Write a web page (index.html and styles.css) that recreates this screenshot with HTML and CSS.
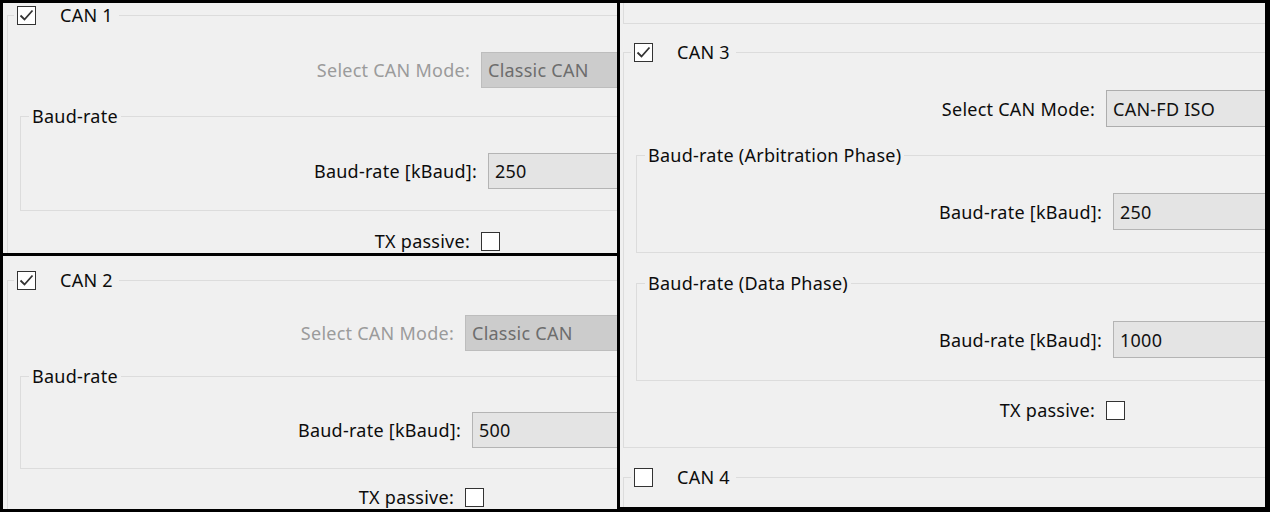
FILE: index.html
```html
<!DOCTYPE html>
<html>
<head>
<meta charset="utf-8">
<link rel="stylesheet" href="styles.css">
</head>
<body>
<div class="screen">
  <div class="col">
    <div class="panel p1">
      <fieldset class="grp outer open">
        <legend class="head"><span class="chk on"><svg viewBox="0 0 17 17"><polyline points="2.5,8.5 6.5,12.5 14.5,3.5"/></svg></span><span class="cap">CAN 1</span></legend>
        <div class="row mode"><span class="lbl dis">Select CAN Mode:</span><div class="combo dis">Classic CAN</div></div>
        <fieldset class="grp inner">
          <legend class="sub">Baud-rate</legend>
          <div class="row baud"><span class="lbl">Baud-rate [kBaud]:</span><div class="field">250</div></div>
        </fieldset>
        <div class="row tx"><span class="lbl">TX passive:</span><span class="chk"></span></div>
      </fieldset>
    </div>
    <div class="panel p2">
      <fieldset class="grp outer open">
        <legend class="head"><span class="chk on"><svg viewBox="0 0 17 17"><polyline points="2.5,8.5 6.5,12.5 14.5,3.5"/></svg></span><span class="cap">CAN 2</span></legend>
        <div class="row mode"><span class="lbl dis">Select CAN Mode:</span><div class="combo dis">Classic CAN</div></div>
        <fieldset class="grp inner">
          <legend class="sub">Baud-rate</legend>
          <div class="row baud"><span class="lbl">Baud-rate [kBaud]:</span><div class="field">500</div></div>
        </fieldset>
        <div class="row tx"><span class="lbl">TX passive:</span><span class="chk"></span></div>
      </fieldset>
    </div>
  </div>
  <div class="panel p3">
    <div class="prev"></div>
    <fieldset class="grp outer can3">
      <legend class="head"><span class="chk on"><svg viewBox="0 0 17 17"><polyline points="2.5,8.5 6.5,12.5 14.5,3.5"/></svg></span><span class="cap">CAN 3</span></legend>
      <div class="row mode"><span class="lbl">Select CAN Mode:</span><div class="combo">CAN-FD ISO</div></div>
      <fieldset class="grp inner arb">
        <legend class="sub">Baud-rate (Arbitration Phase)</legend>
        <div class="row baud"><span class="lbl">Baud-rate [kBaud]:</span><div class="field">250</div></div>
      </fieldset>
      <fieldset class="grp inner data">
        <legend class="sub">Baud-rate (Data Phase)</legend>
        <div class="row baud"><span class="lbl">Baud-rate [kBaud]:</span><div class="field">1000</div></div>
      </fieldset>
      <div class="row tx"><span class="lbl">TX passive:</span><span class="chk"></span></div>
    </fieldset>
    <fieldset class="grp outer open can4">
      <legend class="head"><span class="chk"></span><span class="cap">CAN 4</span></legend>
    </fieldset>
  </div>
</div>
</body>
</html>
```
FILE: styles.css
```css
* { box-sizing: border-box; }
html, body { margin: 0; padding: 0; }
body {
  width: 1270px;
  height: 512px;
  overflow: hidden;
  background: #000;
  font-family: "Noto Sans", "Open Sans", sans-serif;
  font-size: 18px;
  letter-spacing: 0.25px;
  color: #0c0c0c;
}
.screen {
  display: grid;
  grid-template-columns: 614px 645px;
  column-gap: 3px;
  padding: 3px 5px 0 3px;
  height: 512px;
  align-items: start;
}
.col { display: flex; flex-direction: column; gap: 3px; }
.panel { background: #f0f0f0; overflow: hidden; }
.p1 { height: 250px; }
.p2 { height: 253px; }
.p3 { height: 504px; }

.grp {
  margin: 0;
  padding: 0;
  border: 1px solid #dcdcdc;
  min-width: 0;
}
legend { padding: 0; }
.grp.outer { width: 1000px; margin-left: 4px; }
.grp.open { padding-bottom: 200px; }

.head {
  display: flex;
  align-items: center;
  margin-left: 6px;
  padding: 0 6px 0 3px;
  height: 19px;
}
.cap { margin-left: 24px; line-height: 19px; }

.sub {
  margin-left: 8px;
  padding: 0 3px;
  line-height: 22px;
}
.grp.inner { width: 900px; margin-left: 12px; }

.row { display: flex; align-items: center; }
.lbl { text-align: right; margin-right: 11px; white-space: nowrap; }
.lbl.dis { color: #9b9b9b; }
.tx { height: 19px; }
.tx .lbl { line-height: 19px; }

.combo, .field {
  width: 300px;
  padding-left: 6px;
  display: flex;
  align-items: center;
  white-space: nowrap;
}
.combo {
  height: 36px;
  background: #e5e5e5;
  border: 1px solid #adadad;
  color: #111;
}
.combo.dis {
  background: #cccccc;
  border-color: #bdbdbd;
  color: #6d6d6d;
}
.field {
  height: 36px;
  background: #e4e4e4;
  border: 1px solid #b4b4b4;
  color: #111;
}

.chk {
  width: 19px;
  height: 19px;
  flex: none;
  border: 1px solid #333;
  background: #fff;
  display: block;
}
.chk svg { display: block; width: 17px; height: 17px; }
.chk polyline { fill: none; stroke: #333; stroke-width: 1.8; }

/* panel 1 */
.p1 .grp.outer { margin-top: 3px; }
.p1 .mode { margin-top: 27px; }
.p1 .mode .lbl, .p1 .tx .lbl { width: 462px; }
.p1 .grp.inner { margin-top: 17px; padding-bottom: 21px; }
.p1 .baud { margin-top: 26px; }
.p1 .baud .lbl { width: 456px; }
.p1 .tx { margin-top: 21px; }

/* panel 2 */
.p2 .grp.outer { margin-top: 15px; }
.p2 .mode { margin-top: 25px; }
.p2 .mode .lbl, .p2 .tx .lbl { width: 446px; }
.p2 .grp.inner { margin-top: 14px; padding-bottom: 20px; }
.p2 .baud { margin-top: 25px; }
.p2 .baud .lbl { width: 440px; }
.p2 .tx { margin-top: 19px; }

/* panel 3 */
.prev {
  width: 1000px;
  height: 21px;
  margin-left: 3px;
  border-left: 1px solid #dcdcdc;
  border-bottom: 1px solid #dcdcdc;
}
.p3 .grp.outer { margin-left: 3px; }
.p3 .head { margin-left: 7px; }
.p3 .grp.can3 { margin-top: 19px; padding-bottom: 27px; }
.p3 .mode { margin-top: 28px; }
.p3 .combo, .p3 .field { height: 37px; }
.p3 .mode .lbl, .p3 .tx .lbl { width: 471px; }
.p3 .baud { margin-top: 27px; }
.p3 .baud .lbl { width: 465px; }
.p3 .grp.arb { margin-top: 17px; padding-bottom: 22px; }
.p3 .grp.data { margin-top: 19px; padding-bottom: 22px; }
.p3 .tx { margin-top: 20px; }
.p3 .grp.can4 { margin-top: 20px; }
```
